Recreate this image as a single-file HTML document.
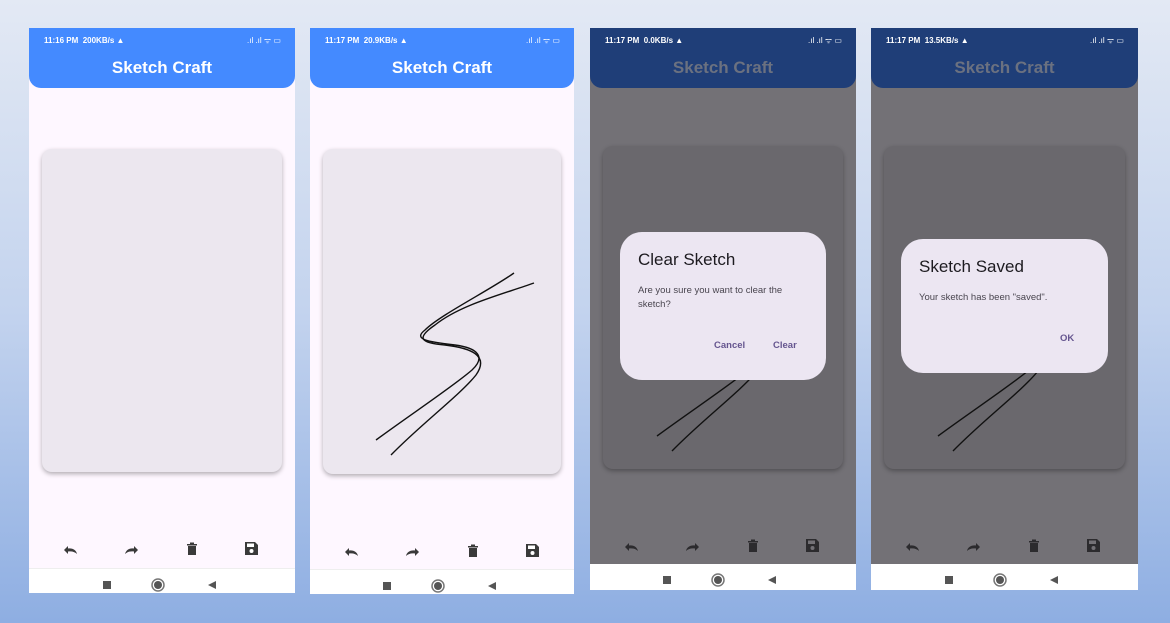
<!DOCTYPE html>
<html><head><meta charset="utf-8"><style>
*{margin:0;padding:0;box-sizing:border-box}
body{width:1170px;height:623px;overflow:hidden;position:relative;font-family:"Liberation Sans",Roboto,sans-serif;background:linear-gradient(180deg,#e3e9f4 0%,#c3d3ee 50%,#8eaee2 100%)}
.ph{position:absolute;overflow:hidden}
.sb{position:absolute;left:0;top:0;width:100%;height:25px;font-size:8px;font-weight:bold;color:#fff;padding:8px 0 0 15px}
.sbr{position:absolute;right:14px;top:7px;font-size:8px;color:#fff}
.ab{position:absolute;left:0;top:0;width:100%;height:60px;border-radius:0 0 12px 12px}
.tt{position:absolute;left:0;width:100%;top:30px;text-align:center;font-size:17px;font-weight:bold}
.card{position:absolute;border-radius:10px;box-shadow:0 2px 5px rgba(0,0,0,.3)}
.nav{position:absolute;left:0;width:100%;background:#fff}
.dlg{position:absolute;background:#ece6f2;border-radius:22px;color:#1d1b20}
.dlg h2{font-weight:normal;font-size:17px;position:absolute;left:18px;top:18px}
.dlg p{font-size:9.5px;position:absolute;left:18px;line-height:14px;color:#49454f}
.btn{position:absolute;font-size:9.5px;font-weight:bold;color:#65558f}
</style></head><body>

<div class="ph" style="left:29px;top:28px;width:266px;height:565px;background:#fef7ff">
 <div class="ab" style="background:#448aff"></div>
 <div class="sb">11:16 PM&nbsp; 200KB/s ▲</div><div class="sbr">.ıl .ıl ᯤ ▭</div>
 <div class="tt" style="color:#fff">Sketch Craft</div>
 <div class="card" style="left:13px;top:121px;width:240px;height:323px;background:#ece7ef"></div>
 <div class="nav" style="top:540px;height:25px;border-top:1px solid #eee"></div>
</div>
<div class="ph" style="left:310px;top:28px;width:264px;height:566px;background:#fef7ff">
 <div class="ab" style="background:#448aff"></div>
 <div class="sb">11:17 PM&nbsp; 20.9KB/s ▲</div><div class="sbr">.ıl .ıl ᯤ ▭</div>
 <div class="tt" style="color:#fff">Sketch Craft</div>
 <div class="card" style="left:13px;top:121px;width:238px;height:325px;background:#ece7ef"></div>
 <div class="nav" style="top:541px;height:25px;border-top:1px solid #eee"></div>
</div>
<div class="ph" style="left:590px;top:28px;width:266px;height:562px;background:#737176">
 <div class="ab" style="background:#1f3e78"></div>
 <div class="sb">11:17 PM&nbsp; 0.0KB/s ▲</div><div class="sbr">.ıl .ıl ᯤ ▭</div>
 <div class="tt" style="color:#6b7180">Sketch Craft</div>
 <div class="card" style="left:13px;top:118px;width:240px;height:323px;background:#6a686d"></div>
 <div class="nav" style="top:536px;height:26px"></div>
</div>
<div class="ph" style="left:871px;top:28px;width:267px;height:562px;background:#737176">
 <div class="ab" style="background:#1f3e78"></div>
 <div class="sb">11:17 PM&nbsp; 13.5KB/s ▲</div><div class="sbr">.ıl .ıl ᯤ ▭</div>
 <div class="tt" style="color:#6b7180">Sketch Craft</div>
 <div class="card" style="left:13px;top:118px;width:241px;height:323px;background:#6a686d"></div>
 <div class="nav" style="top:536px;height:26px"></div>
</div>

<svg style="position:absolute;left:0;top:0" width="1170" height="623">
 <defs>
  <g id="s" fill="none" stroke="#111" stroke-width="1.4">
   <path d="M376,440 C410,415 455,385 472,370 C486,357 478,348 455,345 C430,342 412,340 425,330 C440,315 490,290 514,273"/>
   <path d="M391,455 C420,425 460,395 476,375 C490,355 470,348 445,345 C420,343 416,338 435,325 C460,305 500,295 534,283"/>
  </g>
  <g id="tb" fill="#3a3a3a">
   <path d="M0,4 L4,0 L4,2.5 C9,2 12,4 13,8 C11,6 8,5 4,5.5 L4,8 Z" />
   <path transform="translate(61,0)" d="M13,4 L9,0 L9,2.5 C4,2 1,4 0,8 C2,6 5,5 9,5.5 L9,8 Z"/>
   <path transform="translate(122,-4)" d="M1,2h10v1.5h-10z M4,0.5h4v1.5h-4z M2,4h8v9h-8z"/>
   <path transform="translate(181,-4)" d="M0,0h10l3,3v10h-13z" />
   <rect transform="translate(181,-4)" x="2" y="1.5" width="7" height="3.5" fill="#fff"/>
   <circle transform="translate(181,-4)" cx="6.5" cy="9" r="2" fill="#fff"/>
  </g>
  <g id="tbd" fill="#2c2b2e">
   <path d="M0,4 L4,0 L4,2.5 C9,2 12,4 13,8 C11,6 8,5 4,5.5 L4,8 Z" />
   <path transform="translate(61,0)" d="M13,4 L9,0 L9,2.5 C4,2 1,4 0,8 C2,6 5,5 9,5.5 L9,8 Z"/>
   <path transform="translate(122,-4)" d="M1,2h10v1.5h-10z M4,0.5h4v1.5h-4z M2,4h8v9h-8z"/>
   <path transform="translate(181,-4)" d="M0,0h10l3,3v10h-13z" />
   <rect transform="translate(181,-4)" x="2" y="1.5" width="7" height="3.5" fill="#737176"/>
   <circle transform="translate(181,-4)" cx="6.5" cy="9" r="2" fill="#737176"/>
  </g>
  <g id="nv">
   <rect x="0" y="0" width="8" height="8" fill="#555"/>
   <circle cx="55" cy="4" r="6" fill="none" stroke="#777" stroke-width="1.5"/><circle cx="55" cy="4" r="4" fill="#555"/>
   <path d="M113,0 L105,4 L113,8Z" fill="#555"/>
  </g>
 </defs>
 <use href="#s"/>
 <use href="#s" transform="translate(281,-4)"/>
 <use href="#s" transform="translate(562,-4)"/>
 <use href="#tb" transform="translate(64,546)"/>
 <use href="#tb" transform="translate(345,548)"/>
 <use href="#tbd" transform="translate(625,543)"/>
 <use href="#tbd" transform="translate(906,543)"/>
 <use href="#nv" transform="translate(103,581)"/>
 <use href="#nv" transform="translate(383,582)"/>
 <use href="#nv" transform="translate(663,576)"/>
 <use href="#nv" transform="translate(945,576)"/>
</svg>

<div class="dlg" style="left:620px;top:232px;width:206px;height:148px">
 <h2>Clear Sketch</h2>
 <p style="top:52px;width:175px">Are you sure you want to clear the sketch?</p>
 <div class="btn" style="left:94px;top:108px">Cancel</div>
 <div class="btn" style="left:153px;top:108px">Clear</div>
</div>
<div class="dlg" style="left:901px;top:239px;width:207px;height:134px">
 <h2>Sketch Saved</h2>
 <p style="top:52px">Your sketch has been "saved".</p>
 <div class="btn" style="left:159px;top:94px">OK</div>
</div>
</body></html>
